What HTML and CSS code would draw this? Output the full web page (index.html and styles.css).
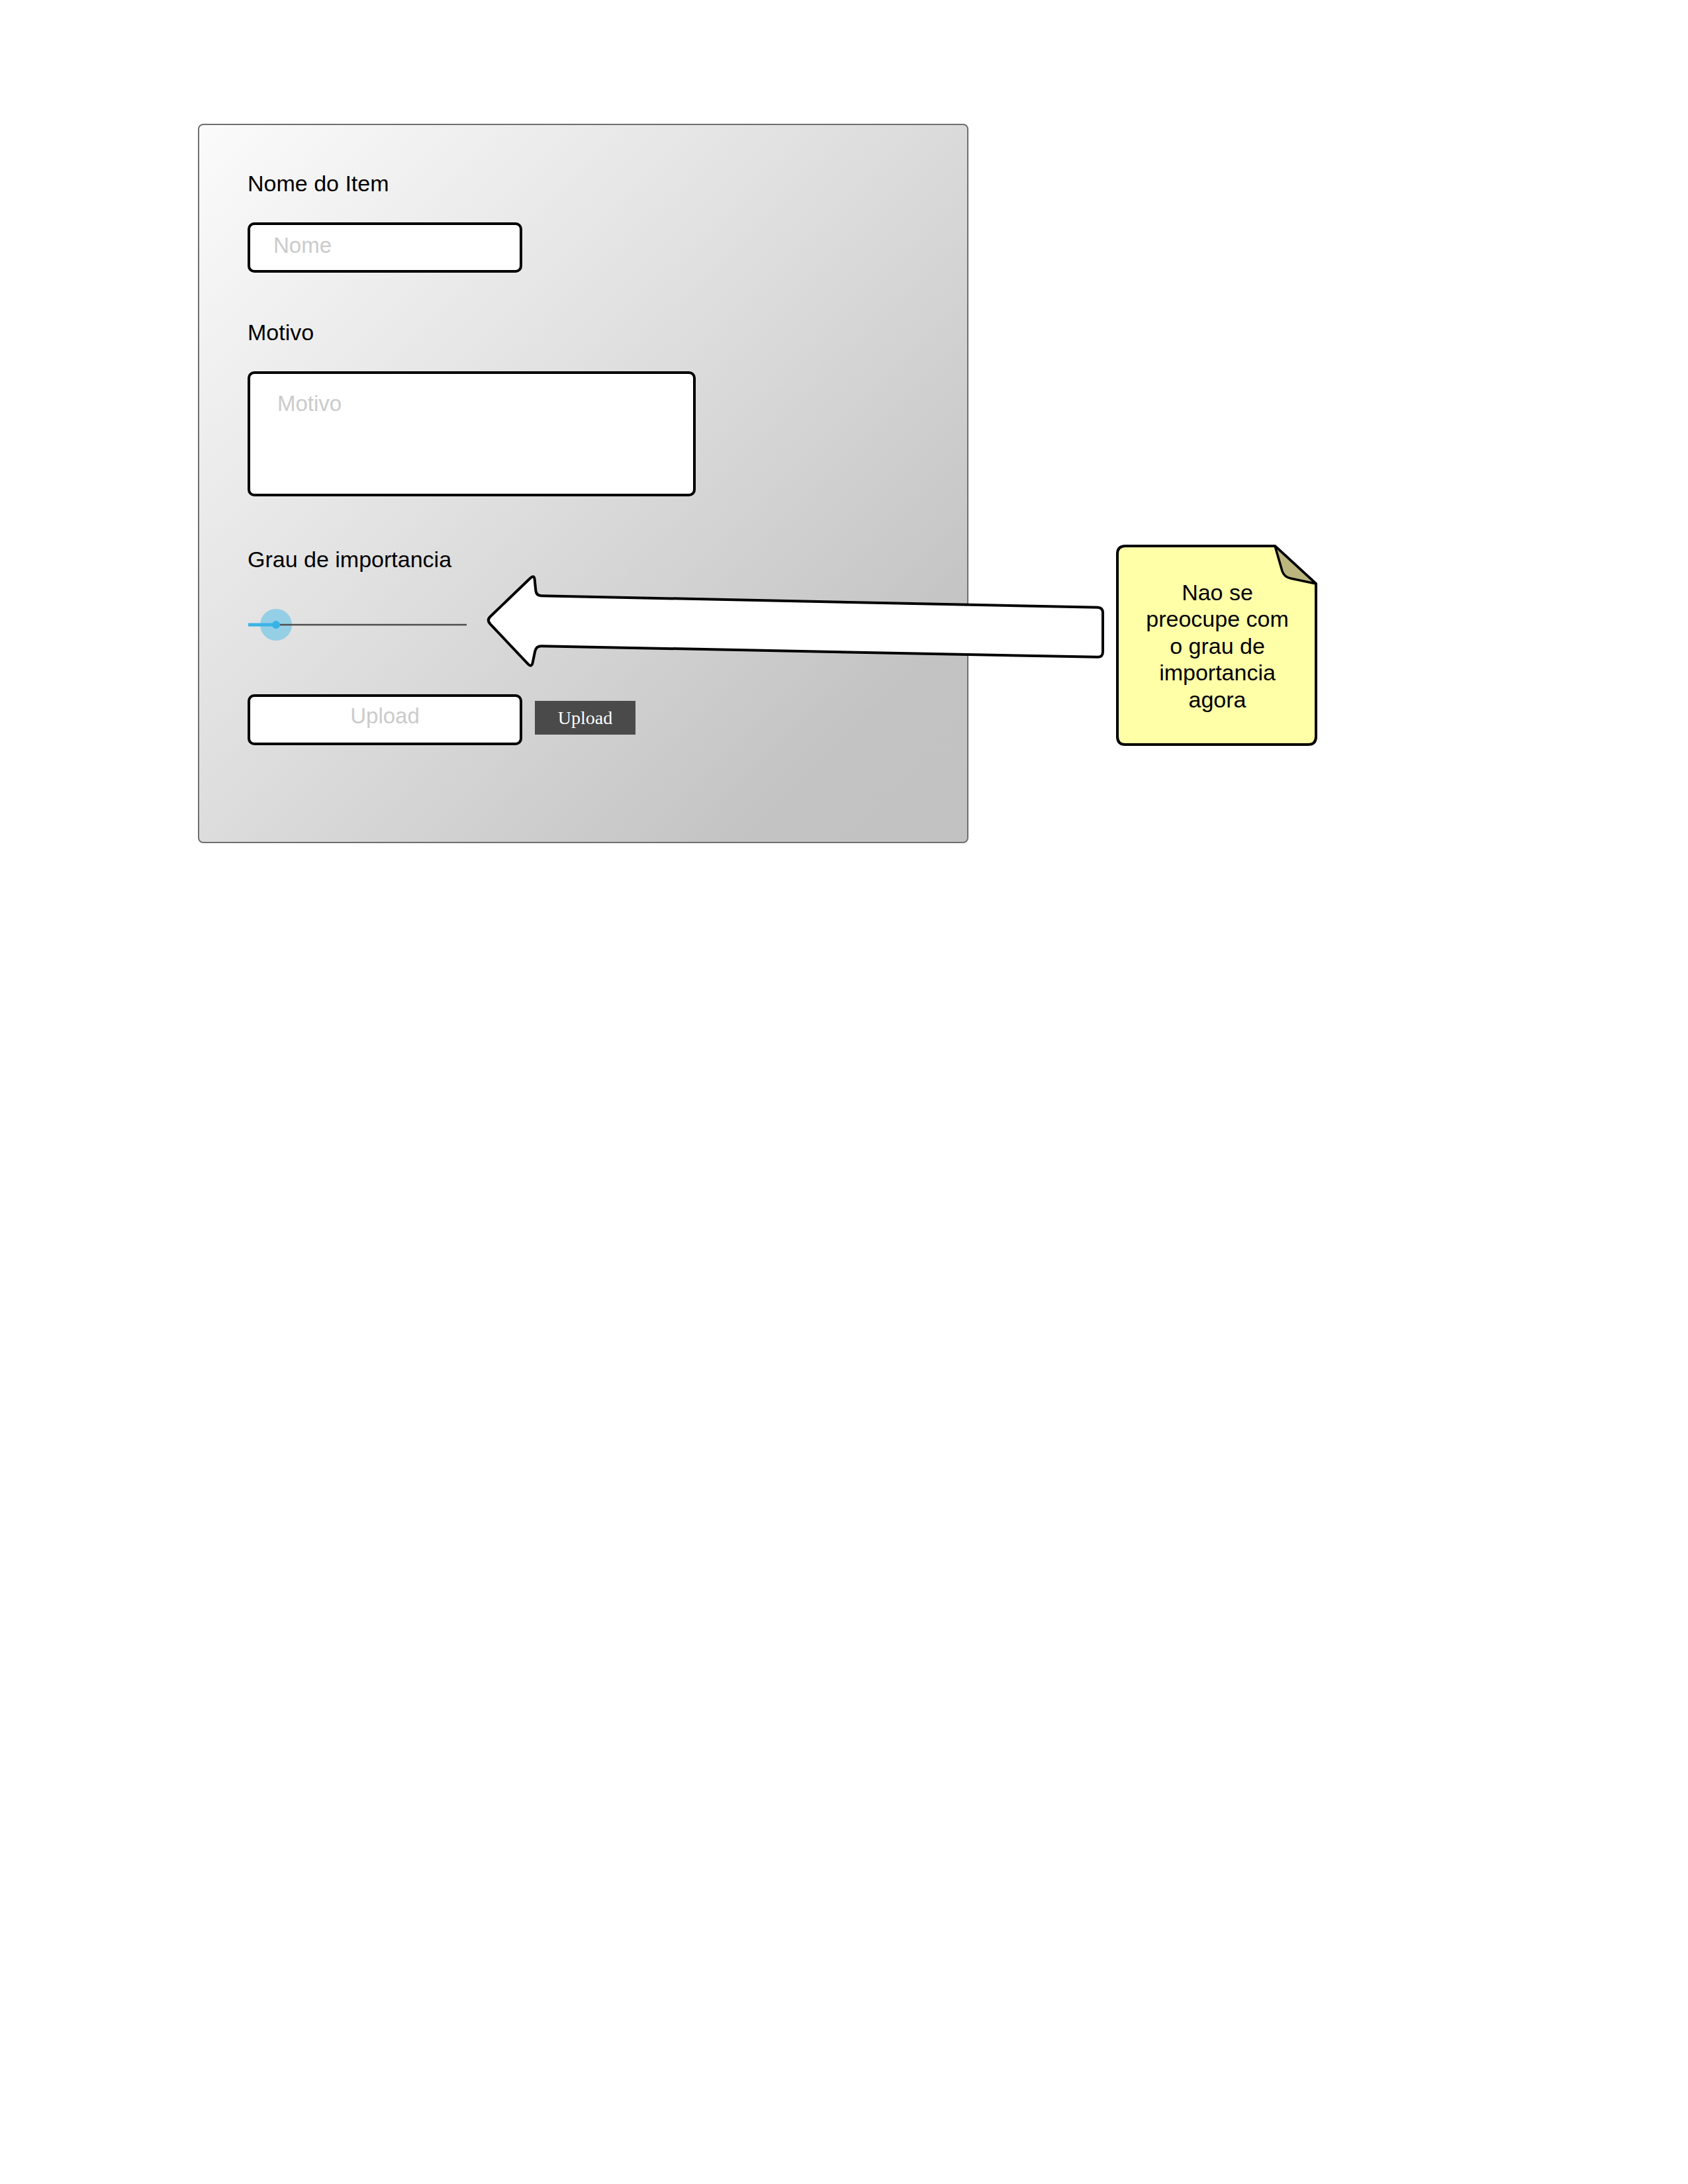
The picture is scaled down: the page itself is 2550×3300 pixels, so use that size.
FILE: index.html
```html
<!DOCTYPE html>
<html lang="pt">
<head>
<meta charset="utf-8">
<title>Cadastro de Item</title>
<link rel="stylesheet" href="styles.css">
</head>
<body>
<main class="canvas">
  <section class="panel">
    <div class="label">Nome do Item</div>
    <div class="field field-name"><span class="placeholder">Nome</span></div>

    <div class="label label-motivo">Motivo</div>
    <div class="field field-area"><span class="placeholder">Motivo</span></div>

    <div class="label label-grau">Grau de importancia</div>
    <div class="slider">
      <svg width="340" height="48" viewBox="0 0 340 48">
        <circle cx="43" cy="24" r="24" fill="#95cfe6"/>
        <line x1="1" y1="24" x2="43" y2="24" stroke="#3bb4e6" stroke-width="5"/>
        <line x1="43" y1="24" x2="331" y2="24" stroke="#4d4d4d" stroke-width="2.5"/>
        <circle cx="43" cy="24" r="6" fill="#36b3e5"/>
      </svg>
    </div>

    <div class="upload-row">
      <div class="field field-upload"><span class="placeholder">Upload</span></div>
      <div class="btn-upload">Upload</div>
    </div>
  </section>

  <svg class="callout-arrow" width="970" height="180" viewBox="0 0 970 180">
    <path d="M20.8,81.5 L81.2,23.5 Q87,18 87.7,26 L89.3,42 Q90,50 98,50.2 L938,67.8 Q946,68 946,76 L946,135 Q946,143 938,142.8 L98,126.2 Q90,126 88.3,133.8 L84.7,151.2 Q83,159 77.5,153.2 L20.5,92.8 Q15,87 20.8,81.5 Z" fill="#ffffff" stroke="#000000" stroke-width="4" stroke-linejoin="round"/>
  </svg>

  <aside class="note">
    <svg class="note-shape" width="304" height="304" viewBox="0 0 304 304">
      <path d="M14,2 H240 L302,59 V290 Q302,302 290,302 H14 Q2,302 2,290 V14 Q2,2 14,2 Z" fill="#ffffa8" stroke="#000000" stroke-width="4" stroke-linejoin="round"/>
      <path d="M240,2 L251,40 Q254,49 264,51 L302,59 Z" fill="#bab67d" stroke="#000000" stroke-width="3.5" stroke-linejoin="round"/>
    </svg>
    <div class="note-text">Nao se<br>preocupe com<br>o grau de<br>importancia<br>agora</div>
  </aside>
</main>
</body>
</html>
```
FILE: styles.css
```css
html, body {
  margin: 0;
  padding: 0;
  background: #ffffff;
}

.canvas {
  position: relative;
  box-sizing: border-box;
  width: 2550px;
  height: 3300px;
  padding: 187px 0 0 299px;
  font-family: "Liberation Sans", Arial, sans-serif;
}

.panel {
  box-sizing: border-box;
  width: 1164px;
  height: 1087px;
  border: 2px solid #6e6e6e;
  border-radius: 8px;
  background: linear-gradient(135deg, #fbfbfb 0%, #e2e2e2 40%, #c3c3c3 85%, #c2c2c2 100%);
  padding: 70px 0 0 73px;
  display: flex;
  flex-direction: column;
  align-items: flex-start;
}

.label {
  font-size: 34px;
  line-height: 37px;
  height: 37px;
  color: #000;
  white-space: nowrap;
}

.label-motivo { margin-top: 72px; }
.label-grau { margin-top: 77px; }

.field {
  box-sizing: border-box;
  background: #ffffff;
  border: 4px solid #000000;
  border-radius: 10px;
  font-size: 33px;
  line-height: 37px;
}

.placeholder {
  color: #cbcbcb;
  white-space: nowrap;
}

.field-name {
  margin-top: 40px;
  width: 415px;
  height: 76px;
  padding: 12px 0 0 35px;
}

.field-area {
  margin-top: 40px;
  width: 677px;
  height: 189px;
  padding: 26px 0 0 41px;
}

.slider {
  margin-top: 56px;
  height: 48px;
  display: flex;
}

.slider svg {
  display: block;
}

.upload-row {
  margin-top: 81px;
  display: flex;
  align-items: flex-start;
  gap: 19px;
}

.field-upload {
  width: 415px;
  height: 77px;
  padding-top: 10px;
  text-align: center;
}

.btn-upload {
  margin-top: 10px;
  width: 152px;
  height: 51px;
  background: #4a4a4a;
  color: #ffffff;
  font-family: "Liberation Serif", "Times New Roman", serif;
  font-size: 28px;
  display: flex;
  align-items: center;
  justify-content: center;
}

.callout-arrow {
  position: absolute;
  left: 720px;
  top: 850px;
  overflow: visible;
}

.note {
  position: absolute;
  left: 1686px;
  top: 823px;
  width: 304px;
  height: 304px;
  display: grid;
}

.note-shape,
.note-text {
  grid-area: 1 / 1;
}

.note-shape {
  display: block;
}

.note-text {
  align-self: center;
  justify-self: center;
  text-align: center;
  font-size: 34px;
  line-height: 40.5px;
  color: #000;
  padding: 2px 0 0 2px;
}
```
